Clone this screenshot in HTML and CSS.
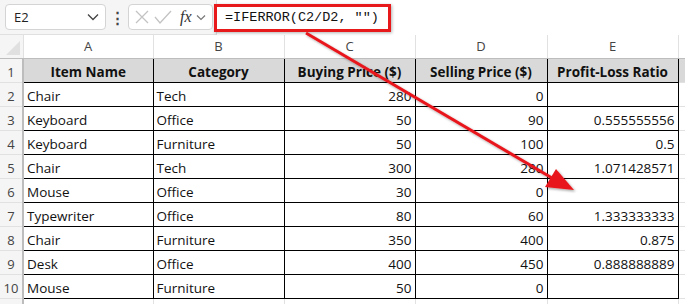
FILE: index.html
```html
<!DOCTYPE html>
<html>
<head>
    <link rel="stylesheet" href="styles.css">
</head>
<body>
    <div class="toolbar">
        <div class="namebox">
            <span>E2</span>
            <svg class="chev" width="12" height="8" viewBox="0 0 12 8"><path d="M1 1.5 L6 6.5 L11 1.5" fill="none" stroke="#444" stroke-width="1.3"/></svg>
        </div>
        <div class="dots">&#8942;</div>
        <div class="fxbox">
            <svg width="16" height="16" viewBox="0 0 16 16"><path d="M2 2 L14 14 M14 2 L2 14" stroke="#c3c3c3" stroke-width="1.3"/></svg>
            <svg width="18" height="16" viewBox="0 0 18 16"><path d="M1 8 L6 14 L17 2" fill="none" stroke="#c3c3c3" stroke-width="1.3"/></svg>
            <span class="fx">fx</span>
            <svg width="10" height="7" viewBox="0 0 10 7"><path d="M1 1.5 L5 5.5 L9 1.5" fill="none" stroke="#777" stroke-width="1.2"/></svg>
        </div>
        <div class="formula">
            <span class="formula-text">=IFERROR(C2/D2, "")</span>
        </div>
    </div>

    <table class="sheet">
        <colgroup>
            <col class="c-row">
            <col class="c-a"><col class="c-b"><col class="c-c"><col class="c-d"><col class="c-e">
            <col class="c-f">
        </colgroup>
        <tr class="col-heads">
            <th class="corner"><span class="tri"></span></th>
            <th>A</th><th>B</th><th>C</th><th>D</th><th>E</th><th class="rest"></th>
        </tr>
        <tr class="head">
            <th class="rn">1</th>
            <td>Item Name</td><td>Category</td><td>Buying Price ($)</td><td>Selling Price ($)</td><td>Profit-Loss Ratio</td><td class="rest"></td>
        </tr>
        <tr><th class="rn">2</th><td>Chair</td><td>Tech</td><td class="num">280</td><td class="num">0</td><td class="num"></td><td class="rest"></td></tr>
        <tr><th class="rn">3</th><td>Keyboard</td><td>Office</td><td class="num">50</td><td class="num">90</td><td class="num">0.555555556</td><td class="rest"></td></tr>
        <tr><th class="rn">4</th><td>Keyboard</td><td>Furniture</td><td class="num">50</td><td class="num">100</td><td class="num">0.5</td><td class="rest"></td></tr>
        <tr><th class="rn">5</th><td>Chair</td><td>Tech</td><td class="num">300</td><td class="num">280</td><td class="num">1.071428571</td><td class="rest"></td></tr>
        <tr><th class="rn">6</th><td>Mouse</td><td>Office</td><td class="num">30</td><td class="num">0</td><td class="num"></td><td class="rest"></td></tr>
        <tr><th class="rn">7</th><td>Typewriter</td><td>Office</td><td class="num">80</td><td class="num">60</td><td class="num">1.333333333</td><td class="rest"></td></tr>
        <tr><th class="rn">8</th><td>Chair</td><td>Furniture</td><td class="num">350</td><td class="num">400</td><td class="num">0.875</td><td class="rest"></td></tr>
        <tr><th class="rn">9</th><td>Desk</td><td>Office</td><td class="num">400</td><td class="num">450</td><td class="num">0.888888889</td><td class="rest"></td></tr>
        <tr><th class="rn">10</th><td>Mouse</td><td>Furniture</td><td class="num">50</td><td class="num">0</td><td class="num"></td><td class="rest"></td></tr>
        <tr class="blank"><th class="rn"></th><td></td><td></td><td></td><td></td><td></td><td class="rest"></td></tr>
    </table>

    <svg class="arrow" width="685" height="304" viewBox="0 0 685 304">
        <defs>
            <filter id="sh" x="-10%" y="-10%" width="130%" height="130%">
                <feDropShadow dx="1.5" dy="1.5" stdDeviation="1" flood-color="#000" flood-opacity="0.35"/>
            </filter>
        </defs>
        <g filter="url(#sh)">
            <line x1="306" y1="33" x2="552" y2="178" stroke="#e8191b" stroke-width="3"/>
            <polygon points="574,190 545,187 556,169" fill="#e8191b"/>
        </g>
    </svg>
</body>
</html>
```

FILE: styles.css
```css
body {
    margin: 0;
    width: 685px;
    height: 304px;
    overflow: hidden;
    position: relative;
    background: #fff;
    font-family: "Open Sans", "Noto Sans", sans-serif;
}

.toolbar {
    height: 35px;
    display: flex;
    align-items: center;
    background: #f5f5f5;
    border-bottom: 1px solid #e0e0e0;
    box-sizing: border-box;
    padding-left: 5px;
}

.namebox {
    width: 101px;
    height: 26px;
    box-sizing: border-box;
    background: #fff;
    border: 1px solid #d4d4d4;
    border-radius: 4px;
    display: flex;
    align-items: center;
    justify-content: space-between;
    padding: 0 6px 0 8px;
    font-size: 13px;
    color: #222;
}

.dots {
    width: 22px;
    text-align: center;
    font-size: 15px;
    color: #444;
    font-weight: bold;
}

.fxbox {
    width: 85px;
    height: 26px;
    box-sizing: border-box;
    background: #fff;
    border: 1px solid #d4d4d4;
    border-radius: 4px;
    display: flex;
    align-items: center;
    gap: 4px;
    padding-left: 5px;
}

.fx {
    font-family: "Liberation Serif", serif;
    font-style: italic;
    font-size: 16px;
    color: #333;
    margin-left: 4px;
}

.formula {
    flex: 1;
    height: 35px;
    background: #fff;
    margin-left: 3px;
    border-left: 1px solid #ddd;
    display: flex;
    align-items: center;
    position: relative;
}

.formula-text {
    font-family: "Liberation Mono", monospace;
    font-size: 13.5px;
    color: #111;
    margin-left: 8px;
}

.formula::before {
    content: "";
    position: absolute;
    left: -3px;
    top: 4px;
    width: 171px;
    height: 22px;
    border: 3px solid #e8191b;
    box-shadow: 1px 1px 3px rgba(0, 0, 0, 0.3);
}

.sheet {
    border-collapse: collapse;
    table-layout: fixed;
    width: 692px;
    font-size: 13.5px;
    line-height: 18px;
}

.c-row { width: 23px; }
.c-a { width: 130px; }
.c-b { width: 131px; }
.c-c { width: 131px; }
.c-d { width: 132px; }
.c-e { width: 131px; }
.c-f { width: 14px; }

.sheet tr {
    height: 24px;
}

.sheet tr.col-heads {
    height: 23px;
}

.col-heads th {
    padding: 0;
    font-weight: normal;
    color: #444;
    background: #fff;
    border-right: 1px solid #e1e1e1;
    border-bottom: 1px solid #bdbdbd;
    font-size: 13px;
    line-height: 16px;
}

.corner {
    position: relative;
    background: #f5f5f5 !important;
}

.tri {
    position: absolute;
    right: 3px;
    bottom: 3px;
    border-style: solid;
    border-width: 0 0 14px 14px;
    border-color: transparent transparent #e0e0e0 transparent;
}

.rn {
    padding: 0 0 1px 0;
    font-weight: normal;
    color: #444;
    background: #f5f5f5;
    border-right: 2px solid #bdbdbd;
    border-bottom: 1px solid #e1e1e1;
    font-size: 13px;
    vertical-align: bottom;
    text-align: center;
}

.sheet td {
    padding: 0 3px 1px 3px;
    border: 1px solid #000;
    color: #111;
    white-space: nowrap;
    overflow: hidden;
    vertical-align: bottom;
}

.head td {
    background: #d9d9d9;
    font-weight: bold;
    text-align: center;
}

.sheet td.num {
    text-align: right;
}

.sheet td.rest {
    border: none;
    border-left: 1px solid #000;
    border-bottom: 1px solid #e1e1e1;
}

.col-heads th.rest {
    border-right: none;
}

.blank td {
    border-top: 1px solid #000;
    border-left: 1px solid #e1e1e1;
    border-right: 1px solid #e1e1e1;
    border-bottom: none;
}

.arrow {
    position: absolute;
    left: 0;
    top: 0;
    pointer-events: none;
}
```
